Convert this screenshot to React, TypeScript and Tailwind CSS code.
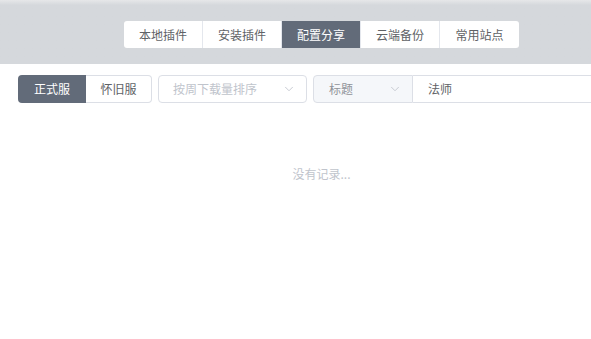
import { ChevronDown } from "lucide-react";

const tabs = ["本地插件", "安装插件", "配置分享", "云端备份", "常用站点"];

export default function App() {
  const active = "配置分享";
  return (
    <div
      className="w-[591px] h-[339px] overflow-hidden bg-white"
      style={{ fontFamily: '"Noto Sans CJK SC", "Noto Sans", sans-serif' }}
    >
      <div className="w-[643px]">
        {/* header bar */}
        <div className="h-[64px] bg-[#d5d8dc] bg-gradient-to-b from-[#e6e7e9] via-[#d5d8dc] via-[8%] to-[#d5d8dc] flex justify-center pt-[21px]">
          <div className="flex h-[27px] rounded-[3px] bg-white overflow-hidden">
            {tabs.map((t, i) => (
              <div
                key={t}
                className={
                  "w-[79px] flex items-center justify-center text-[12px] " +
                  (t === active
                    ? "bg-[#626b79] text-white"
                    : "text-[#606266]") +
                  (i < tabs.length - 1 ? " border-r border-[#e4e7ed]" : "")
                }
              >
                {t}
              </div>
            ))}
          </div>
        </div>

        {/* filter row */}
        <div className="flex items-center px-[18px] mt-[11px] h-[28px]">
          <div className="flex h-full">
            <div className="w-[68px] flex items-center justify-center rounded-l-[4px] bg-[#626b79] text-white text-[12px]">
              正式服
            </div>
            <div className="w-[66px] flex items-center justify-center rounded-r-[4px] border border-l-0 border-[#dcdfe6] text-[#606266] text-[12px]">
              怀旧服
            </div>
          </div>
          <div className="ml-[6px] w-[149px] h-full flex items-center justify-between rounded-[4px] border border-[#dcdfe6] pl-[14px] pr-[10px] text-[12px] text-[#c0c4cc]">
            <span>按周下载量排序</span>
            <ChevronDown size={14} strokeWidth={1.5} className="text-[#c0c4cc]" />
          </div>
          <div className="ml-[6px] flex-1 h-full flex">
            <div className="w-[100px] h-full flex items-center justify-between rounded-l-[4px] border border-[#dcdfe6] bg-[#f5f7fa] pl-[15px] pr-[10px] text-[12px] text-[#909399]">
              <span>标题</span>
              <ChevronDown size={14} strokeWidth={1.5} className="text-[#c0c4cc]" />
            </div>
            <div className="flex-1 h-full flex items-center rounded-r-[4px] border border-l-0 border-[#dcdfe6] pl-[15px] text-[12px] text-[#606266]">
              法师
            </div>
          </div>
        </div>

        {/* empty */}
        <div className="mt-[62px] text-center text-[12px] text-[#c0c4cc]">没有记录...</div>
      </div>
    </div>
  );
}
